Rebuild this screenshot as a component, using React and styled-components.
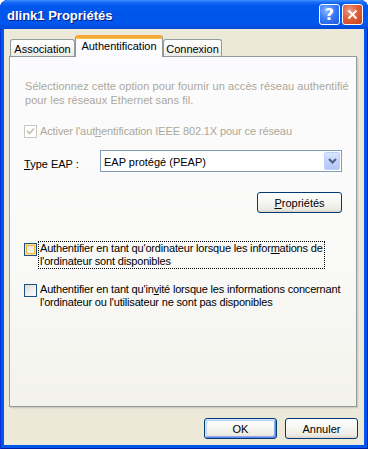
import React from 'react';
import styled, { createGlobalStyle, css } from 'styled-components';

const Global = createGlobalStyle`
  html, body { margin: 0; padding: 0; background: #ffffff; }
  body { font-family: "Liberation Sans", "DejaVu Sans", sans-serif; font-size: 11px; color: #000; }
  * { box-sizing: border-box; }
`;

const Window = styled.div`
  width: 368px;
  height: 449px;
  display: flex;
  flex-direction: column;
  background: #0055ea;
  border-radius: 8px 8px 0 0;
  overflow: hidden;
  box-shadow: inset 1px 0 0 #0831d9, inset -1px 0 0 #001ea0, inset 0 -1px 0 #001ea0;
`;

const TitleBar = styled.div`
  height: 29px;
  flex: none;
  display: flex;
  align-items: center;
  gap: 2px;
  padding: 0 5px 0 7px;
  border-radius: 8px 8px 0 0;
  background: linear-gradient(
    to bottom,
    #3d95ff 0%,
    #1a6bf5 8%,
    #0058ee 20%,
    #0055e9 50%,
    #0057ee 80%,
    #0049d8 100%
  );
`;

const Title = styled.div`
  flex: 1;
  color: #ffffff;
  font-family: "Liberation Sans", "DejaVu Sans", sans-serif;
  font-weight: bold;
  font-size: 13px;
  text-shadow: 1px 1px 0 #0a1883;
  padding-top: 1px;
`;

const CaptionButton = styled.div`
  width: 21px;
  height: 21px;
  border: 1px solid #ffffff;
  border-radius: 3px;
  display: flex;
  align-items: center;
  justify-content: center;
  color: #ffffff;
  ${(p) =>
    p.$kind === 'close'
      ? css`
          background: radial-gradient(circle at 35% 30%, #f0a08a 0%, #e2633f 40%, #c8401c 100%);
        `
      : css`
          background: radial-gradient(circle at 35% 30%, #8fb8ff 0%, #3b7cf6 45%, #1a56d8 100%);
        `}
`;

const HelpGlyph = styled.span`
  font-family: "DejaVu Sans", "Liberation Sans", sans-serif;
  font-weight: bold;
  font-size: 16px;
  line-height: 1;
  margin-top: 1px;
`;

const Frame = styled.div`
  flex: 1;
  margin: 0 4px 4px 4px;
  background: #ece9d8;
  display: flex;
  flex-direction: column;
  padding: 6px 6px 0 5px;
`;

const TabRow = styled.div`
  display: flex;
  align-items: flex-end;
  height: 22px;
  padding-left: 1px;
  margin-bottom: -1px;
  position: relative;
  z-index: 1;
`;

const Tab = styled.div`
  display: flex;
  align-items: center;
  justify-content: center;
  border: 1px solid #919b9c;
  border-bottom: none;
  border-radius: 3px 3px 0 0;
  width: ${(p) => p.$w}px;
  ${(p) =>
    p.$active
      ? css`
          height: 22px;
          align-self: flex-end;
          background: #fcfcfe;
          border-top: 3px solid #f7a83a;
          box-shadow: inset 0 1px 0 #ffc73c;
          padding-bottom: 3px;
        `
      : css`
          height: 17px;
          align-self: flex-start;
          margin-top: 4px;
          background: linear-gradient(to bottom, #ffffff 0%, #f7f7f4 50%, #ecebe5 100%);
          padding-top: 1px;
        `}
`;

const Panel = styled.div`
  width: 348px;
  height: 351px;
  border: 1px solid #919b9c;
  background: linear-gradient(to bottom, #fcfcfe 0%, #f9f9f7 60%, #f3f2ec 100%);
  box-shadow: 1px 1px 0 #d0cebf, 2px 2px 0 #e2dfd0;
  display: flex;
  flex-direction: column;
  padding: 22px 14px 0 14px;
`;

const Description = styled.div`
  color: #aca899;
  line-height: 14px;
  padding-left: 1px;
  white-space: nowrap;
  letter-spacing: 0.06px;
`;

const CheckRow = styled.div`
  display: flex;
  align-items: flex-start;
  gap: 2px;
  margin-top: ${(p) => p.$mt}px;
`;

const Box = styled.div`
  width: 13px;
  height: 13px;
  flex: none;
  margin-top: ${(p) => p.$mt || 0}px;
  display: flex;
  align-items: center;
  justify-content: center;
  ${(p) =>
    p.$disabled
      ? css`
          border: 1px solid #cac8bb;
          background: #ffffff;
        `
      : css`
          border: 1px solid #1c5180;
          background: linear-gradient(135deg, #dcdcd7 0%, #f2f2ef 60%, #ffffff 100%);
        `}
  ${(p) =>
    p.$hover &&
    css`
      box-shadow: inset 0 0 0 1px #fedf9c, inset 0 0 0 2px #f8b636;
    `}
`;

const CheckLabel = styled.div`
  line-height: 13px;
  padding: 0 1px;
  white-space: nowrap;
  letter-spacing: ${(p) => (p.$disabled ? '-0.11px' : '-0.18px')};
  color: ${(p) => (p.$disabled ? '#aca899' : '#000')};
  ${(p) =>
    p.$focus &&
    css`
      outline: 1px dotted #000;
      outline-offset: 0;
    `}
`;

const TypeRow = styled.div`
  display: flex;
  align-items: flex-start;
  margin-top: 12px;
`;

const FieldLabel = styled.div`
  width: 76px;
  flex: none;
  padding-top: 8px;
  line-height: 13px;
`;

const Select = styled.div`
  width: 242px;
  height: 22px;
  border: 1px solid #7f9db9;
  background: #ffffff;
  display: flex;
  align-items: center;
  padding: 0 1px 0 3px;
`;

const SelectText = styled.div`
  flex: 1;
  padding-top: 1px;
`;

const DropButton = styled.div`
  width: 16px;
  height: 18px;
  border: 1px solid #bad0fb;
  border-radius: 2px;
  background: linear-gradient(to bottom, #dbe6fd 0%, #c3d4fb 50%, #b2c6f5 100%);
  display: flex;
  align-items: center;
  justify-content: center;
`;

const RightRow = styled.div`
  display: flex;
  justify-content: flex-end;
  margin-top: ${(p) => p.$mt}px;
  gap: 8px;
`;

const Button = styled.div`
  width: ${(p) => p.$w}px;
  height: 21px;
  border: 1px solid #003c74;
  border-radius: 3px;
  background: linear-gradient(to bottom, #ffffff 0%, #f6f6f3 45%, #eceae3 85%, #d8d4c8 100%);
  display: flex;
  align-items: center;
  justify-content: center;
  padding-top: 1px;
  ${(p) =>
    p.$default &&
    css`
      box-shadow: inset 1px 1px 0 #cee7ff, inset -1px -1px 0 #6982ee, inset 2px 2px 0 #bcd4f6,
        inset -2px -2px 0 #89ade4;
    `}
`;

const Check = ({ color }) => (
  <svg width="9" height="9" viewBox="0 0 9 9">
    <path d="M1 4 L3.5 6.5 L8 1.5" fill="none" stroke={color} strokeWidth="1.8" />
  </svg>
);

export default function App() {
  return (
    <>
      <Global />
      <Window>
        <TitleBar>
          <Title>dlink1 Propriétés</Title>
          <CaptionButton $kind="help">
            <HelpGlyph>?</HelpGlyph>
          </CaptionButton>
          <CaptionButton $kind="close">
            <svg width="11" height="11" viewBox="0 0 11 11">
              <path d="M1.5 1.5 L9.5 9.5 M9.5 1.5 L1.5 9.5" stroke="#fff" strokeWidth="2" />
            </svg>
          </CaptionButton>
        </TitleBar>
        <Frame>
          <TabRow>
            <Tab $w={65}>Association</Tab>
            <Tab $w={88} $active>
              Authentification
            </Tab>
            <Tab $w={59}>Connexion</Tab>
          </TabRow>
          <Panel>
            <Description>
              Sélectionnez cette option pour fournir un accès réseau authentifié
              <br />
              pour les réseaux Ethernet sans fil.
            </Description>
            <CheckRow $mt={18}>
              <Box $disabled>
                <Check color="#c6c3b4" />
              </Box>
              <CheckLabel $disabled>
                Activer l'aut<u>h</u>entification IEEE 802.1X pour ce réseau
              </CheckLabel>
            </CheckRow>
            <TypeRow>
              <FieldLabel>
                <u>T</u>ype EAP :
              </FieldLabel>
              <Select>
                <SelectText>EAP protégé (PEAP)</SelectText>
                <DropButton>
                  <svg width="9" height="6" viewBox="0 0 9 6">
                    <path d="M1 1 L4.5 4.5 L8 1" fill="none" stroke="#4d6185" strokeWidth="2" />
                  </svg>
                </DropButton>
              </Select>
            </TypeRow>
            <RightRow $mt={20}>
              <Button $w={85}>
                <span>
                  <u>P</u>ropriétés
                </span>
              </Button>
            </RightRow>
            <CheckRow $mt={29}>
              <Box $hover $mt={1} />
              <CheckLabel $focus>
                Authentifier en tant qu'ordinateur lorsque les infor<u>m</u>ations de
                <br />
                l'ordinateur sont disponibles
              </CheckLabel>
            </CheckRow>
            <CheckRow $mt={15}>
              <Box $mt={1} />
              <CheckLabel>
                Authentifier en tant qu'in<u>v</u>ité lorsque les informations concernant
                <br />
                l'ordinateur ou l'utilisateur ne sont pas disponibles
              </CheckLabel>
            </CheckRow>
          </Panel>
          <RightRow $mt={11}>
            <Button $w={73} $default>
              OK
            </Button>
            <Button $w={73}>Annuler</Button>
          </RightRow>
        </Frame>
      </Window>
    </>
  );
}
